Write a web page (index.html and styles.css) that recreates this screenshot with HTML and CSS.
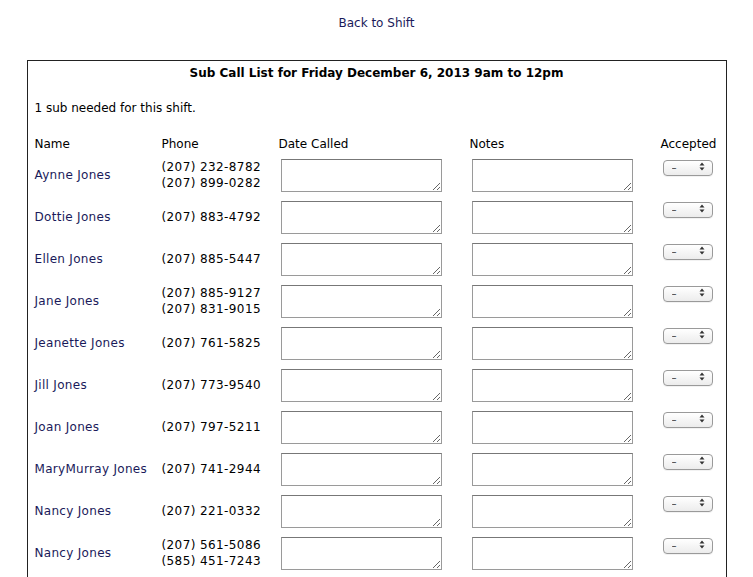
FILE: index.html
```html
<!DOCTYPE html>
<html>
<head>
<meta charset="utf-8">
<title>Sub Call List</title>
<link rel="stylesheet" href="styles.css">
</head>
<body>
<div class="top"><a class="back" href="#">Back to Shift</a></div>
<div class="box">
  <div class="title">Sub Call List for Friday December 6, 2013 9am to 12pm</div>
  <div class="needed">1 sub needed for this shift.</div>
  <div class="grid">
    <div class="hd">Name</div><div class="hd">Phone</div><div class="hd">Date Called</div><div class="hd">Notes</div><div class="hd">Accepted</div>

    <div class="name">Aynne Jones</div><div class="phone">(207) 232-8782<br>(207) 899-0282</div><div class="cell"><textarea></textarea></div><div class="cell"><textarea></textarea></div><div class="acc"><span class="sel"><select><option>–</option></select><svg class="arr" width="6" height="9" viewBox="0 0 6 9"><path d="M3 0.5 L5.5 3.5 H0.5 Z M3 8.5 L5.5 5.5 H0.5 Z" fill="#333"/></svg></span></div>

    <div class="name">Dottie Jones</div><div class="phone">(207) 883-4792</div><div class="cell"><textarea></textarea></div><div class="cell"><textarea></textarea></div><div class="acc"><span class="sel"><select><option>–</option></select><svg class="arr" width="6" height="9" viewBox="0 0 6 9"><path d="M3 0.5 L5.5 3.5 H0.5 Z M3 8.5 L5.5 5.5 H0.5 Z" fill="#333"/></svg></span></div>

    <div class="name">Ellen Jones</div><div class="phone">(207) 885-5447</div><div class="cell"><textarea></textarea></div><div class="cell"><textarea></textarea></div><div class="acc"><span class="sel"><select><option>–</option></select><svg class="arr" width="6" height="9" viewBox="0 0 6 9"><path d="M3 0.5 L5.5 3.5 H0.5 Z M3 8.5 L5.5 5.5 H0.5 Z" fill="#333"/></svg></span></div>

    <div class="name">Jane Jones</div><div class="phone">(207) 885-9127<br>(207) 831-9015</div><div class="cell"><textarea></textarea></div><div class="cell"><textarea></textarea></div><div class="acc"><span class="sel"><select><option>–</option></select><svg class="arr" width="6" height="9" viewBox="0 0 6 9"><path d="M3 0.5 L5.5 3.5 H0.5 Z M3 8.5 L5.5 5.5 H0.5 Z" fill="#333"/></svg></span></div>

    <div class="name">Jeanette Jones</div><div class="phone">(207) 761-5825</div><div class="cell"><textarea></textarea></div><div class="cell"><textarea></textarea></div><div class="acc"><span class="sel"><select><option>–</option></select><svg class="arr" width="6" height="9" viewBox="0 0 6 9"><path d="M3 0.5 L5.5 3.5 H0.5 Z M3 8.5 L5.5 5.5 H0.5 Z" fill="#333"/></svg></span></div>

    <div class="name">Jill Jones</div><div class="phone">(207) 773-9540</div><div class="cell"><textarea></textarea></div><div class="cell"><textarea></textarea></div><div class="acc"><span class="sel"><select><option>–</option></select><svg class="arr" width="6" height="9" viewBox="0 0 6 9"><path d="M3 0.5 L5.5 3.5 H0.5 Z M3 8.5 L5.5 5.5 H0.5 Z" fill="#333"/></svg></span></div>

    <div class="name">Joan Jones</div><div class="phone">(207) 797-5211</div><div class="cell"><textarea></textarea></div><div class="cell"><textarea></textarea></div><div class="acc"><span class="sel"><select><option>–</option></select><svg class="arr" width="6" height="9" viewBox="0 0 6 9"><path d="M3 0.5 L5.5 3.5 H0.5 Z M3 8.5 L5.5 5.5 H0.5 Z" fill="#333"/></svg></span></div>

    <div class="name">MaryMurray Jones</div><div class="phone">(207) 741-2944</div><div class="cell"><textarea></textarea></div><div class="cell"><textarea></textarea></div><div class="acc"><span class="sel"><select><option>–</option></select><svg class="arr" width="6" height="9" viewBox="0 0 6 9"><path d="M3 0.5 L5.5 3.5 H0.5 Z M3 8.5 L5.5 5.5 H0.5 Z" fill="#333"/></svg></span></div>

    <div class="name">Nancy Jones</div><div class="phone">(207) 221-0332</div><div class="cell"><textarea></textarea></div><div class="cell"><textarea></textarea></div><div class="acc"><span class="sel"><select><option>–</option></select><svg class="arr" width="6" height="9" viewBox="0 0 6 9"><path d="M3 0.5 L5.5 3.5 H0.5 Z M3 8.5 L5.5 5.5 H0.5 Z" fill="#333"/></svg></span></div>

    <div class="name">Nancy Jones</div><div class="phone">(207) 561-5086<br>(585) 451-7243</div><div class="cell"><textarea></textarea></div><div class="cell"><textarea></textarea></div><div class="acc"><span class="sel"><select><option>–</option></select><svg class="arr" width="6" height="9" viewBox="0 0 6 9"><path d="M3 0.5 L5.5 3.5 H0.5 Z M3 8.5 L5.5 5.5 H0.5 Z" fill="#333"/></svg></span></div>
  </div>
</div>
</body>
</html>
```
FILE: styles.css
```css
html, body {
  margin: 0;
  padding: 0;
  background: #fff;
}
body {
  font-family: "DejaVu Sans", Verdana, sans-serif;
  font-size: 12px;
  line-height: 16px;
  color: #000;
}
.top {
  text-align: center;
  padding-top: 15px;
  height: 16px;
}
.back {
  color: #1a1a5a;
  text-decoration: none;
}
.box {
  width: 691px;
  margin: 29px auto 0;
  border: 1px solid #222;
  padding: 3px 0 30px 7px;
}
.title {
  text-align: center;
  font-weight: bold;
  padding-top: 1px;
  margin-left: -7px;
}
.needed {
  margin-top: 19px;
}
.grid {
  margin-top: 19px;
  display: grid;
  grid-template-columns: 127px 117px 191px 191px auto;
  grid-auto-rows: 42px;
  grid-template-rows: 19px;
  align-items: center;
}
.hd {
  align-self: start;
  padding-top: 1px;
}
.name {
  color: #1a1a5a;
  letter-spacing: 0.3px;
}
.phone {
  letter-spacing: 0.4px;
}
.cell {
  align-self: start;
  padding-top: 5px;
}
.cell textarea {
  display: block;
  box-sizing: border-box;
  width: 161px;
  height: 33px;
  margin: 0 0 0 2px;
  border: 1px solid #9a9a9a;
  border-top-color: #777;
  border-radius: 0;
  padding: 2px;
  font-family: "DejaVu Sans", Verdana, sans-serif;
  font-size: 12px;
  background: #fff;
  resize: both;
}
.acc {
  align-self: start;
  padding-top: 5px;
}
.sel {
  position: relative;
  display: block;
  width: 50px;
  height: 16px;
  margin-left: 2px;
}
.sel select {
  -webkit-appearance: none;
  appearance: none;
  box-sizing: border-box;
  width: 50px;
  height: 16px;
  margin: 0;
  padding: 0 0 0 8px;
  border: 1px solid #9a9a9a;
  border-radius: 4px;
  background: linear-gradient(#ffffff, #ececec);
  font-family: "DejaVu Sans", Verdana, sans-serif;
  font-size: 10px;
  line-height: 14px;
  color: #333;
  box-shadow: 0 1px 0 rgba(0,0,0,0.05);
}
.arr {
  position: absolute;
  right: 8px;
  top: 3px;
  pointer-events: none;
}
```
